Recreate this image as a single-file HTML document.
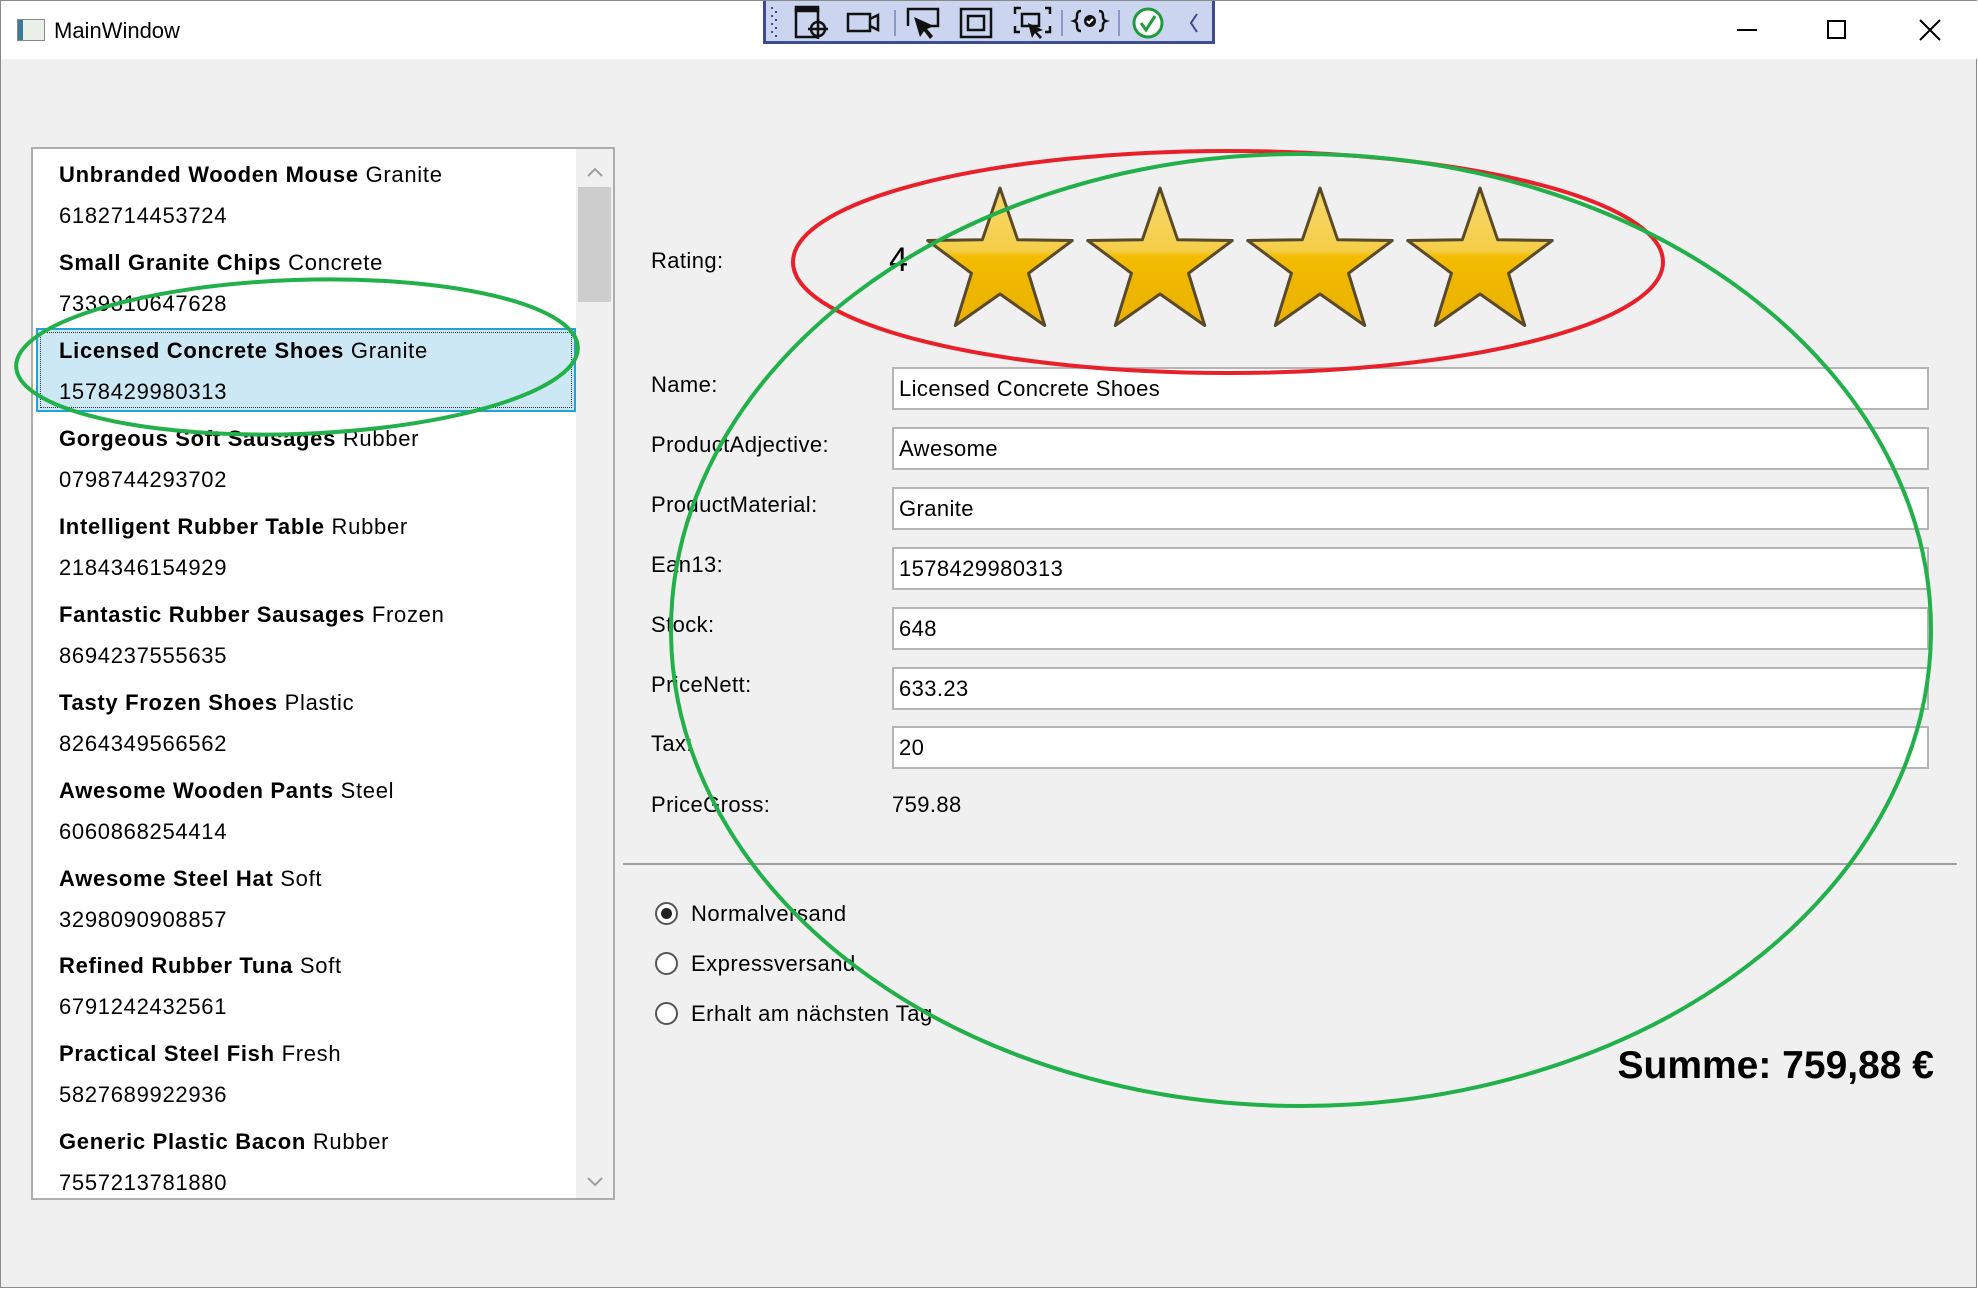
<!DOCTYPE html>
<html><head><meta charset="utf-8"><style>
*{margin:0;padding:0;box-sizing:border-box}
body{width:1978px;height:1289px;background:#fff;position:relative;overflow:hidden;font-family:"Liberation Sans",sans-serif;color:#000}
.abs{position:absolute}
#win{position:absolute;left:0;top:0;width:1977px;height:1288px;border:1px solid #8a8a8a;background:#f0f0f0}
#title{position:absolute;left:0;top:0;width:1976px;height:58px;background:#fff}
.lb{position:absolute;left:30px;top:146px;width:584px;height:1053px;background:#fff;border:2px solid #adadad}
.item{position:absolute;left:58px;font-size:22px;letter-spacing:0.7px;white-space:nowrap}
.item b{font-weight:bold}
.lbl{position:absolute;left:650px;font-size:22px;letter-spacing:0.4px}
.tb{position:absolute;left:891px;width:1037px;height:43px;background:#fff;border:2px solid #b5b5b5;font-size:22px;letter-spacing:0.4px;padding:7px 0 0 5px}
.radio{position:absolute;left:654px;width:23px;height:23px;border:2px solid #555;border-radius:50%;background:#fff}
.rt{position:absolute;left:690px;font-size:22px;letter-spacing:0.5px}
</style></head><body>
<div id="win">
<div id="title">
 <div class="abs" style="left:16px;top:18px;width:28px;height:22px;background:linear-gradient(90deg,#3b7a9c 0 5px,#e8f0e8 5px);border:1px solid #888"></div>
 <div class="abs" style="left:53px;top:17px;font-size:22px">MainWindow</div>
 <div class="abs" style="left:1736px;top:28px;width:20px;height:2px;background:#000"></div>
 <div class="abs" style="left:1826px;top:19px;width:19px;height:19px;border:2px solid #000"></div>
 <svg class="abs" style="left:1918px;top:18px" width="22" height="22"><path d="M1 1L21 21M21 1L1 21" stroke="#000" stroke-width="2"/></svg>
</div>
<div class="abs" style="left:762px;top:0;width:452px;height:43px;background:#cbd5ef;border:3px solid #3e4b8c;border-top:none"></div>
<svg class="abs" style="left:762px;top:0" width="452" height="43">
 <g fill="#3e4b8c"><rect x="8" y="6" width="2" height="2"/><rect x="12" y="10" width="2" height="2"/><rect x="8" y="14" width="2" height="2"/><rect x="12" y="18" width="2" height="2"/><rect x="8" y="22" width="2" height="2"/><rect x="12" y="26" width="2" height="2"/><rect x="8" y="30" width="2" height="2"/><rect x="12" y="34" width="2" height="2"/></g>
 <g stroke="#111" stroke-width="2.5" fill="none">
  <rect x="33" y="8" width="22" height="28"/><rect x="33" y="6" width="22" height="4" fill="#111"/>
  <circle cx="55" cy="28" r="7" fill="#cbd5ef"/><path d="M55 18v20M45 28h20"/>
  <rect x="85" y="13" width="22" height="17"/><path d="M107 18l8-4v15l-8-4"/>
  <path d="M145 25v-17h30v17h-10"/><path d="M198 8h30v28h-30z"/><rect x="205" y="15" width="16" height="14"/>
  <path d="M252 13v-6h6M282 7h5v6M252 25v6h5M282 31h5v-6"/><rect x="259" y="13" width="17" height="12"/>
  <path d="M318 10c-4 0-4 3-4 6s-3 4-3 4 3 1 3 4 0 6 4 6M336 10c4 0 4 3 4 6s3 4 3 4-3 1-3 4 0 6-4 6"/>
 </g>
 <path d="M151 16l6 20 4-6 6 8 3-3-6-7 7-3z" fill="#111"/>
 <path d="M265 22l4 15 3-5 5 6 2-2-5-5 6-2z" fill="#111"/>
 <circle cx="327" cy="20" r="6" fill="#111"/><path d="M324 20l2 2 4-4" stroke="#fff" stroke-width="2" fill="none"/>
 <g stroke="#8a9ac8" stroke-width="2"><path d="M132 9v26M299 9v26M356 9v26"/></g>
 <circle cx="385" cy="22" r="14" fill="#fff" stroke="#1e9c3c" stroke-width="3"/><path d="M378 22l5 7 9-14" stroke="#1e9c3c" stroke-width="3" fill="none"/>
 <path d="M434 13l-6 9 6 9" stroke="#3e4b8c" stroke-width="2" fill="none"/>
</svg>

<div class="lb">
 <div class="abs" style="left:543px;top:0;width:37px;height:1049px;background:#f0f0f0"></div>
 <div class="abs" style="left:545px;top:38px;width:33px;height:115px;background:#cdcdcd"></div>
 <svg class="abs" style="left:552px;top:16px" width="20" height="14"><path d="M3 11l7-7 7 7" stroke="#a0a0a0" stroke-width="2" fill="none"/></svg>
 <svg class="abs" style="left:552px;top:1026px" width="20" height="14"><path d="M3 3l7 7 7-7" stroke="#a0a0a0" stroke-width="2" fill="none"/></svg>
 <div class="abs" style="left:3px;top:179px;width:540px;height:84px;background:#cce8f5;border:2px solid #26a0da"><div style="position:absolute;inset:2px;border:1px dotted #333"></div></div>
</div>
<div class="item" style="top:161px"><b>Unbranded Wooden Mouse</b> Granite</div><div class="item" style="top:202px">6182714453724</div>
<div class="item" style="top:249px"><b>Small Granite Chips</b> Concrete</div><div class="item" style="top:290px">7339810647628</div>
<div class="item" style="top:337px"><b>Licensed Concrete Shoes</b> Granite</div><div class="item" style="top:378px">1578429980313</div>
<div class="item" style="top:425px"><b>Gorgeous Soft Sausages</b> Rubber</div><div class="item" style="top:466px">0798744293702</div>
<div class="item" style="top:513px"><b>Intelligent Rubber Table</b> Rubber</div><div class="item" style="top:554px">2184346154929</div>
<div class="item" style="top:601px"><b>Fantastic Rubber Sausages</b> Frozen</div><div class="item" style="top:642px">8694237555635</div>
<div class="item" style="top:689px"><b>Tasty Frozen Shoes</b> Plastic</div><div class="item" style="top:730px">8264349566562</div>
<div class="item" style="top:777px"><b>Awesome Wooden Pants</b> Steel</div><div class="item" style="top:818px">6060868254414</div>
<div class="item" style="top:865px"><b>Awesome Steel Hat</b> Soft</div><div class="item" style="top:906px">3298090908857</div>
<div class="item" style="top:952px"><b>Refined Rubber Tuna</b> Soft</div><div class="item" style="top:993px">6791242432561</div>
<div class="item" style="top:1040px"><b>Practical Steel Fish</b> Fresh</div><div class="item" style="top:1081px">5827689922936</div>
<div class="item" style="top:1128px"><b>Generic Plastic Bacon</b> Rubber</div><div class="item" style="top:1169px">7557213781880</div>

<div class="lbl" style="top:247px">Rating:</div>
<div class="abs" style="left:888px;top:240px;font-size:34px">4</div>
<svg class="abs" style="left:920px;top:180px" width="640" height="160">
 <defs><linearGradient id="g" x1="0" y1="0" x2="0" y2="1"><stop offset="0" stop-color="#f7d96a"/><stop offset="0.45" stop-color="#f5ce4a"/><stop offset="0.5" stop-color="#f2bc00"/><stop offset="1" stop-color="#eab000"/></linearGradient></defs>
 <g fill="url(#g)" stroke="#5a4a2a" stroke-width="3" stroke-linejoin="round">
  <polygon transform="translate(79,83)" points="0,-76 17.6,-24.3 72.3,-23.5 28.5,9.3 44.7,61.5 0,30 -44.7,61.5 -28.5,9.3 -72.3,-23.5 -17.6,-24.3"/>
  <polygon transform="translate(239,83)" points="0,-76 17.6,-24.3 72.3,-23.5 28.5,9.3 44.7,61.5 0,30 -44.7,61.5 -28.5,9.3 -72.3,-23.5 -17.6,-24.3"/>
  <polygon transform="translate(399,83)" points="0,-76 17.6,-24.3 72.3,-23.5 28.5,9.3 44.7,61.5 0,30 -44.7,61.5 -28.5,9.3 -72.3,-23.5 -17.6,-24.3"/>
  <polygon transform="translate(559,83)" points="0,-76 17.6,-24.3 72.3,-23.5 28.5,9.3 44.7,61.5 0,30 -44.7,61.5 -28.5,9.3 -72.3,-23.5 -17.6,-24.3"/>
 </g>
</svg>
<div class="lbl" style="top:371px">Name:</div><div class="tb" style="top:366px">Licensed Concrete Shoes</div>
<div class="lbl" style="top:431px">ProductAdjective:</div><div class="tb" style="top:426px">Awesome</div>
<div class="lbl" style="top:491px">ProductMaterial:</div><div class="tb" style="top:486px">Granite</div>
<div class="lbl" style="top:551px">Ean13:</div><div class="tb" style="top:546px">1578429980313</div>
<div class="lbl" style="top:611px">Stock:</div><div class="tb" style="top:606px">648</div>
<div class="lbl" style="top:671px">PriceNett:</div><div class="tb" style="top:666px">633.23</div>
<div class="lbl" style="top:730px">Tax:</div><div class="tb" style="top:725px">20</div>
<div class="lbl" style="top:791px">PriceGross:</div><div class="abs" style="left:891px;top:791px;font-size:22px;letter-spacing:0.4px">759.88</div>
<div class="abs" style="left:622px;top:862px;width:1334px;height:2px;background:#a0a0a0"></div>
<div class="radio" style="top:901px"><div style="position:absolute;left:4px;top:4px;width:11px;height:11px;border-radius:50%;background:#222"></div></div>
<div class="rt" style="top:900px">Normalversand</div>
<div class="radio" style="top:951px"></div><div class="rt" style="top:950px">Expressversand</div>
<div class="radio" style="top:1001px"></div><div class="rt" style="top:1000px">Erhalt am nächsten Tag</div>
<div class="abs" style="right:42px;top:1043px;font-size:39px;font-weight:bold">Summe: 759,88 €</div>

<svg class="abs" style="left:0;top:0" width="1978" height="1289">
 <g fill="none" stroke-width="4">
  <ellipse cx="1227" cy="261" rx="435" ry="111" stroke="#e8202a"/>
  <ellipse cx="1300" cy="629" rx="630" ry="476" stroke="#22b04a"/>
  <ellipse cx="296" cy="356" rx="281" ry="77" stroke="#22b04a" transform="rotate(-2 296 356)"/>
 </g>
</svg>
</div>
</body></html>
